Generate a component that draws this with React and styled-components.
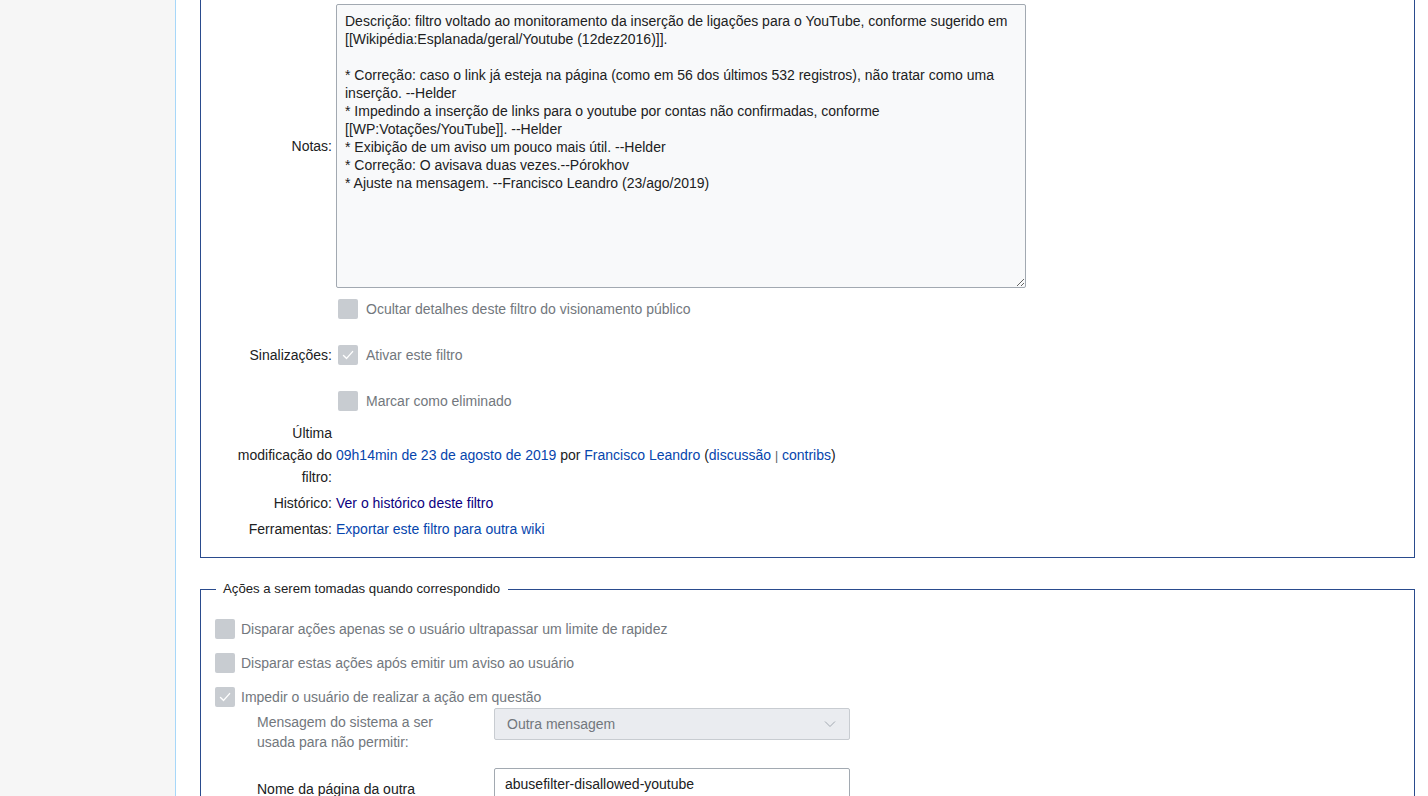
import React from "react";
import styled, { createGlobalStyle } from "styled-components";

const GlobalStyle = createGlobalStyle`
  html, body {
    margin: 0;
    padding: 0;
    background: #fff;
  }
  body {
    font-family: "Liberation Sans", Arial, sans-serif;
    font-size: 14px;
    color: #202122;
    overflow: hidden;
  }
`;

const notes = `Descrição: filtro voltado ao monitoramento da inserção de ligações para o YouTube, conforme sugerido em [[Wikipédia:Esplanada/geral/Youtube (12dez2016)]].

* Correção: caso o link já esteja na página (como em 56 dos últimos 532 registros), não tratar como uma inserção. --Helder
* Impedindo a inserção de links para o youtube por contas não confirmadas, conforme [[WP:Votações/YouTube]]. --Helder
* Exibição de um aviso um pouco mais útil. --Helder
* Correção: O avisava duas vezes.--Pórokhov
* Ajuste na mensagem. --Francisco Leandro (23/ago/2019)`;

function CheckMark() {
  return (
    <svg width="14" height="14" viewBox="0 0 14 14" fill="none">
      <path
        d="M2.5 7.4 L5.6 10.4 L11.6 3.6"
        stroke="#fff"
        strokeWidth="1.4"
        strokeLinecap="round"
        strokeLinejoin="round"
      />
    </svg>
  );
}

function Checkbox({ checked, label, gap }) {
  return (
    <CheckLine $gap={gap}>
      <Box>{checked && <CheckMark />}</Box>
      <CheckText>{label}</CheckText>
    </CheckLine>
  );
}

export default function App() {
  return (
    <>
      <GlobalStyle />
      <Page>
        <Sidebar />
        <Main>
          <EditSet>
            <Row $h={284}>
              <Label>Notas:</Label>
              <Value>
                <NotesArea defaultValue={notes} readOnly />
              </Value>
            </Row>
            <Row $h={42}>
              <Label />
              <Value>
                <Checkbox label="Ocultar detalhes deste filtro do visionamento público" />
              </Value>
            </Row>
            <Row $h={50}>
              <Label>Sinalizações:</Label>
              <Value>
                <Checkbox checked label="Ativar este filtro" />
              </Value>
            </Row>
            <Row $h={42}>
              <Label />
              <Value>
                <Checkbox label="Marcar como eliminado" />
              </Value>
            </Row>
            <InfoRow>
              <Label>Última modificação do filtro:</Label>
              <Value>
                <Link href="#">09h14min de 23 de agosto de 2019</Link> por{" "}
                <Link href="#">Francisco Leandro</Link> (
                <Link href="#">discussão</Link> <Sep>|</Sep>{" "}
                <Link href="#">contribs</Link>)
              </Value>
            </InfoRow>
            <InfoRow $top={4}>
              <Label>Histórico:</Label>
              <Value>
                <Link href="#" $visited>
                  Ver o histórico deste filtro
                </Link>
              </Value>
            </InfoRow>
            <InfoRow $top={4}>
              <Label>Ferramentas:</Label>
              <Value>
                <Link href="#">Exportar este filtro para outra wiki</Link>
              </Value>
            </InfoRow>
          </EditSet>

          <ActionSet>
            <Legend>Ações a serem tomadas quando correspondido</Legend>
            <ActionList>
              <Checkbox gap={6} label="Disparar ações apenas se o usuário ultrapassar um limite de rapidez" />
              <Checkbox gap={6} label="Disparar estas ações após emitir um aviso ao usuário" />
              <Checkbox gap={6} checked label="Impedir o usuário de realizar a ação em questão" />
            </ActionList>
            <SubFields>
              <SubLabel $muted>Mensagem do sistema a ser usada para não permitir:</SubLabel>
              <Select>
                <span>Outra mensagem</span>
                <svg width="12" height="8" viewBox="0 0 12 8" fill="none">
                  <path d="M1 1.5 L6 6.5 L11 1.5" stroke="#a2a9b1" strokeWidth="1" />
                </svg>
              </Select>
              <SubLabel $pt={11}>Nome da página da outra mensagem do sistema:</SubLabel>
              <TextInput defaultValue="abusefilter-disallowed-youtube" />
            </SubFields>
          </ActionSet>
        </Main>
      </Page>
    </>
  );
}

const Page = styled.div`
  display: flex;
  height: 796px;
  overflow: hidden;
`;

const Sidebar = styled.aside`
  width: 175px;
  flex-shrink: 0;
  background: #f6f6f6;
  border-right: 1px solid #a7d7f9;
`;

const Main = styled.main`
  flex: 1;
  min-width: 0;
  padding: 0 13px 0 24px;
`;

const EditSet = styled.div`
  border: 1px solid #2a4b8d;
  border-top: none;
  padding: 4px 0 17px 21px;
`;

const Row = styled.div`
  display: grid;
  grid-template-columns: 110px 1fr;
  column-gap: 4px;
  align-items: center;
  height: ${(p) => p.$h}px;
`;

const InfoRow = styled.div`
  display: grid;
  grid-template-columns: 110px 1fr;
  column-gap: 4px;
  align-items: center;
  line-height: 22px;
  margin-top: ${(p) => p.$top || 0}px;
`;

const Label = styled.div`
  text-align: right;
  color: #202122;
`;

const Value = styled.div`
  min-width: 0;
`;

const Sep = styled.span`
  font-size: 12px;
  color: #54595d;
`;

const NotesArea = styled.textarea`
  display: block;
  box-sizing: border-box;
  width: 690px;
  height: 284px;
  margin: 0;
  padding: 7px 8px;
  font-family: "Liberation Sans", Arial, sans-serif;
  font-size: 14px;
  line-height: 18px;
  color: #202122;
  background: #f8f9fa;
  border: 1px solid #a2a9b1;
  border-radius: 2px;
  resize: vertical;
  outline: none;
`;

const CheckLine = styled.div`
  display: flex;
  align-items: center;
  gap: ${(p) => p.$gap || 8}px;
  height: 20px;
  margin-left: ${(p) => (p.$gap ? 0 : 2)}px;
`;

const Box = styled.span`
  width: 20px;
  height: 20px;
  flex-shrink: 0;
  border-radius: 2px;
  background: #c8ccd1;
  display: flex;
  align-items: center;
  justify-content: center;
`;

const CheckText = styled.span`
  color: #72777d;
  white-space: nowrap;
`;

const Link = styled.a`
  color: ${(p) => (p.$visited ? "#0b0080" : "#0645ad")};
  text-decoration: none;
`;

const ActionSet = styled.fieldset`
  margin: 22px 0 0;
  padding: 21px 0 0 14px;
  border: 1px solid #2a4b8d;
  border-bottom: none;
  min-width: 0;
`;

const Legend = styled.legend`
  padding: 0 8px 0 7px;
  margin-left: 1px;
  font-size: 13.2px;
  line-height: 18px;
  color: #202122;
`;

const ActionList = styled.div`
  display: flex;
  flex-direction: column;
  gap: 14px;
`;

const SubFields = styled.div`
  display: grid;
  grid-template-columns: 205px 356px;
  column-gap: 32px;
  row-gap: 16px;
  align-items: start;
  margin: 1px 0 0 42px;
`;

const SubLabel = styled.div`
  padding-top: ${(p) => p.$pt || 4}px;
  line-height: 20px;
  color: ${(p) => (p.$muted ? "#72777d" : "#202122")};
`;

const Select = styled.div`
  box-sizing: border-box;
  height: 32px;
  display: flex;
  align-items: center;
  justify-content: space-between;
  padding: 0 13px 0 12px;
  background: #eaecf0;
  border: 1px solid #c8ccd1;
  border-radius: 2px;
  color: #72777d;
`;

const TextInput = styled.input`
  box-sizing: border-box;
  width: 356px;
  height: 32px;
  margin: 0;
  padding: 0 10px;
  font-family: "Liberation Sans", Arial, sans-serif;
  font-size: 14px;
  color: #202122;
  background: #fff;
  border: 1px solid #a2a9b1;
  border-radius: 2px;
  outline: none;
`;
